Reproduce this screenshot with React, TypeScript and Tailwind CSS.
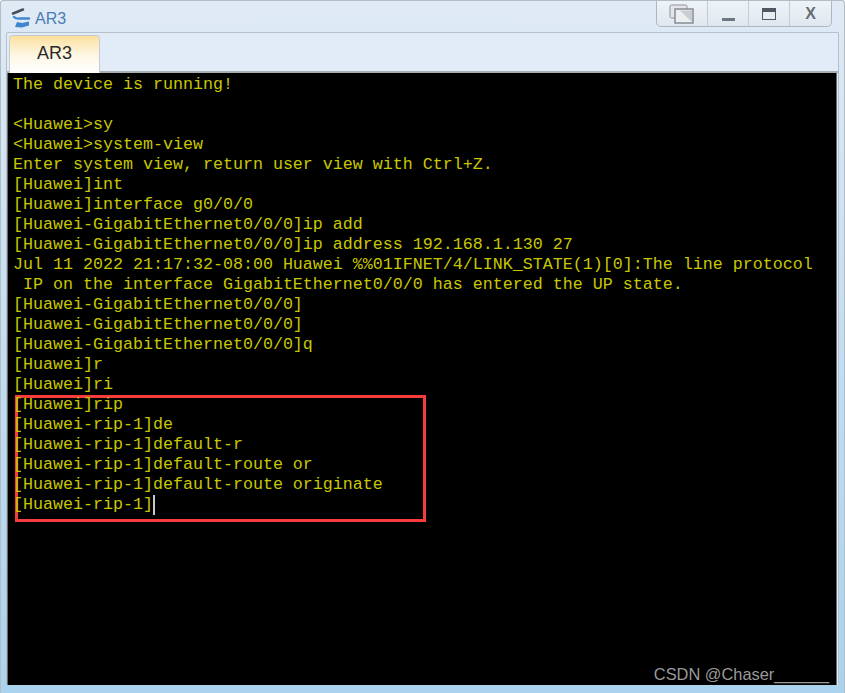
import React from 'react';

const lines = [
  'The device is running!',
  '',
  '<Huawei>sy',
  '<Huawei>system-view',
  'Enter system view, return user view with Ctrl+Z.',
  '[Huawei]int',
  '[Huawei]interface g0/0/0',
  '[Huawei-GigabitEthernet0/0/0]ip add',
  '[Huawei-GigabitEthernet0/0/0]ip address 192.168.1.130 27',
  'Jul 11 2022 21:17:32-08:00 Huawei %%01IFNET/4/LINK_STATE(1)[0]:The line protocol',
  ' IP on the interface GigabitEthernet0/0/0 has entered the UP state.',
  '[Huawei-GigabitEthernet0/0/0]',
  '[Huawei-GigabitEthernet0/0/0]',
  '[Huawei-GigabitEthernet0/0/0]q',
  '[Huawei]r',
  '[Huawei]ri',
];

const boxed = [
  '[Huawei]rip',
  '[Huawei-rip-1]de',
  '[Huawei-rip-1]default-r',
  '[Huawei-rip-1]default-route or',
  '[Huawei-rip-1]default-route originate',
];

const Line = ({ text }: { text: string }) => (
  <div className="h-5 whitespace-pre leading-5">{text}</div>
);

export default function App() {
  return (
    <div className="flex h-[693px] w-[845px] flex-col overflow-hidden rounded-t-[3px] border-l border-r border-t border-[#b4bcc4] bg-gradient-to-b from-[#dfeaf5] via-[#c3def2] to-[#a9d3ee] font-['Liberation_Sans',sans-serif]">
      {/* Title bar */}
      <div className="flex h-[31px] shrink-0 items-start justify-between pl-[10px] pr-[12px]">
        <div className="flex items-center gap-[3px] pt-[4px]">
          <svg width="21" height="24" viewBox="0 0 21 24">
            <path d="M2 7.5 L12 3.5" stroke="#4a4f55" strokeWidth="2.6" strokeLinecap="round" />
            <path d="M3 11 C6 14 9 12 12 12.5 L18 12.5" stroke="#3f86cf" strokeWidth="2.4" fill="none" strokeLinecap="round" />
            <path d="M4 21 L6 16 L11 17 L18 15.5 L18 19.5 L11 21.5 Z" fill="#3f86cf" />
          </svg>
          <span className="pt-[2px] text-[16px] leading-[24px] text-[#4a7cb4]">AR3</span>
        </div>
        <div className="flex h-[26px] items-center rounded-b-[5px] border-x border-b border-[#aeb7bf] bg-gradient-to-b from-[#eef3f7] to-[#dfe7ee]">
          <div className="flex h-full w-[51px] items-center justify-center border-r border-[#c3ccd4]">
            <svg width="26" height="20" viewBox="0 0 26 20">
              <rect x="1" y="1" width="17" height="13" rx="1.5" fill="#e4e7ea" stroke="#8d9299" />
              <rect x="6" y="5" width="18" height="14" fill="#eceef0" stroke="#80868d" strokeWidth="1.4" />
              <path d="M11 6.5 L23 18 L23 6.5 Z" fill="#c9ccd0" />
            </svg>
          </div>
          <div className="flex h-full w-[41px] items-center justify-center border-r border-[#c3ccd4]">
            <div className="mt-[11px] h-[3px] w-[13px] bg-[#6d7784]" />
          </div>
          <div className="flex h-full w-[41px] items-center justify-center border-r border-[#c3ccd4]">
            <div className="h-[12px] w-[14px] border border-t-[4px] border-[#4f5862] bg-[#e8edf2]" />
          </div>
          <div className="flex h-full w-[41px] items-center justify-center">
            <span className="text-[16px] font-bold leading-none text-[#666d75]">X</span>
          </div>
        </div>
      </div>

      {/* Tab panel */}
      <div className="mx-[5px] flex min-h-0 flex-1 flex-col rounded-t-[2px] border-x border-t border-[#b5c0cb] bg-[#e1ecf8]">
        <div className="flex h-[40px] shrink-0 items-end border-b-2 border-[#a8adb2] pl-[2px]">
          <div className="relative top-[2px] flex h-[38px] w-[91px] items-center justify-center rounded-t-[4px] border border-b-0 border-[#c6ccd2] bg-gradient-to-b from-[#fbe09c] via-[#fdf6e2] to-white pb-[2px] text-[18px] text-[#2a2a2a]">
            AR3
          </div>
        </div>

        {/* Terminal */}
        <div className="mr-[1px] min-h-0 flex-1 border-x border-[#6b6b6b] bg-black pl-[5px] pt-[2px] font-['Liberation_Mono',monospace] text-[16.67px] text-[#c8c800]">
          {lines.map((text, i) => (
            <Line key={i} text={text} />
          ))}
          <div className="ml-[2px] h-[127px] w-[411px] border-[3px] border-[#f83c3c]">
            <div className="-ml-[5px] -mt-[3px]">
              {boxed.map((text) => (
                <Line key={text} text={text} />
              ))}
              <div className="flex h-5 items-center whitespace-pre leading-5">
                [Huawei-rip-1]
                <span className="h-[20px] w-[2px] bg-[#c8c8c8]" />
              </div>
            </div>
          </div>
          <div className="mt-[142px] pr-[7px] text-right font-['Liberation_Sans',sans-serif] text-[16.4px] leading-5 text-[#9a9a9a]">
            CSDN @Chaser______
          </div>
        </div>
      </div>
      <div className="h-[8px] shrink-0" />
    </div>
  );
}
